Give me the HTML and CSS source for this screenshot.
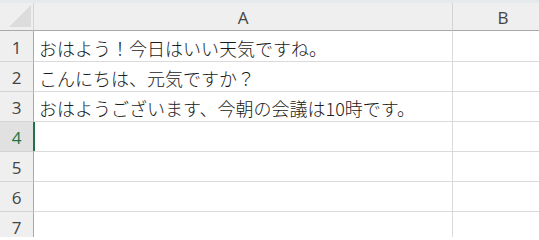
FILE: index.html
```html
<!DOCTYPE html>
<html lang="ja">
<head>
<meta charset="utf-8">
<link rel="stylesheet" href="styles.css">
</head>
<body>
<div class="strip"></div>
<div class="sheet">
  <div class="corner"><div class="tri"></div></div>
  <div class="colhead">A</div>
  <div class="colhead last">B</div>

  <div class="rowhead">1</div>
  <div class="cell">おはよう！今日はいい天気ですね。</div>
  <div class="cell last"></div>

  <div class="rowhead">2</div>
  <div class="cell">こんにちは、元気ですか？</div>
  <div class="cell last"></div>

  <div class="rowhead">3</div>
  <div class="cell">おはようございます、今朝の会議は10時です。</div>
  <div class="cell last"></div>

  <div class="rowhead sel">4</div>
  <div class="cell active"></div>
  <div class="cell last"></div>

  <div class="rowhead">5</div>
  <div class="cell"></div>
  <div class="cell last"></div>

  <div class="rowhead">6</div>
  <div class="cell"></div>
  <div class="cell last"></div>

  <div class="rowhead">7</div>
  <div class="cell"></div>
  <div class="cell last"></div>
</div>
</body>
</html>
```

FILE: styles.css
```css
html, body {
  margin: 0;
  padding: 0;
  background: #ffffff;
  overflow: hidden;
}
body {
  width: 539px;
  height: 237px;
}
.strip {
  height: 3px;
  background: #e7eaed;
}
.sheet {
  display: grid;
  grid-template-columns: 34px 419px 100px;
  grid-template-rows: 28px 31px repeat(6, 30px);
}
.corner {
  background: #efefef;
  border-right: 1px solid #d4d4d4;
  border-bottom: 1px solid #a9a9a9;
  position: relative;
}
.tri {
  position: absolute;
  left: 9px;
  top: 2px;
  width: 22px;
  height: 22px;
  background: #dcdcdc;
  clip-path: polygon(100% 0, 100% 100%, 0 100%);
}
.colhead {
  background: #efefef;
  border-right: 1px solid #d4d4d4;
  border-bottom: 1px solid #a9a9a9;
  display: flex;
  align-items: center;
  justify-content: center;
  font-family: "Open Sans", "Noto Sans", sans-serif;
  font-size: 17px;
  color: #444444;
  padding-top: 1px;
}
.rowhead {
  background: #efefef;
  border-right: 1px solid #a9a9a9;
  border-bottom: 1px solid #d4d4d4;
  display: flex;
  align-items: center;
  justify-content: center;
  font-family: "Open Sans", "Noto Sans", sans-serif;
  font-size: 17px;
  color: #444444;
  padding-top: 2px;
}
.rowhead.sel {
  background: #e1e1e1;
  color: #217346;
  border-right: 2px solid #217346;
  margin-right: -1px;
}
.cell {
  border-right: 1px solid #dadada;
  border-bottom: 1px solid #dadada;
  display: flex;
  align-items: center;
  padding-left: 5px;
  padding-top: 3px;
  font-family: "Noto Sans CJK JP", sans-serif;
  font-size: 18px;
  font-weight: 300;
  line-height: 1;
  color: #1a1a1a;
  white-space: nowrap;
}
.cell.last, .colhead.last {
  border-right: none;
}
```
